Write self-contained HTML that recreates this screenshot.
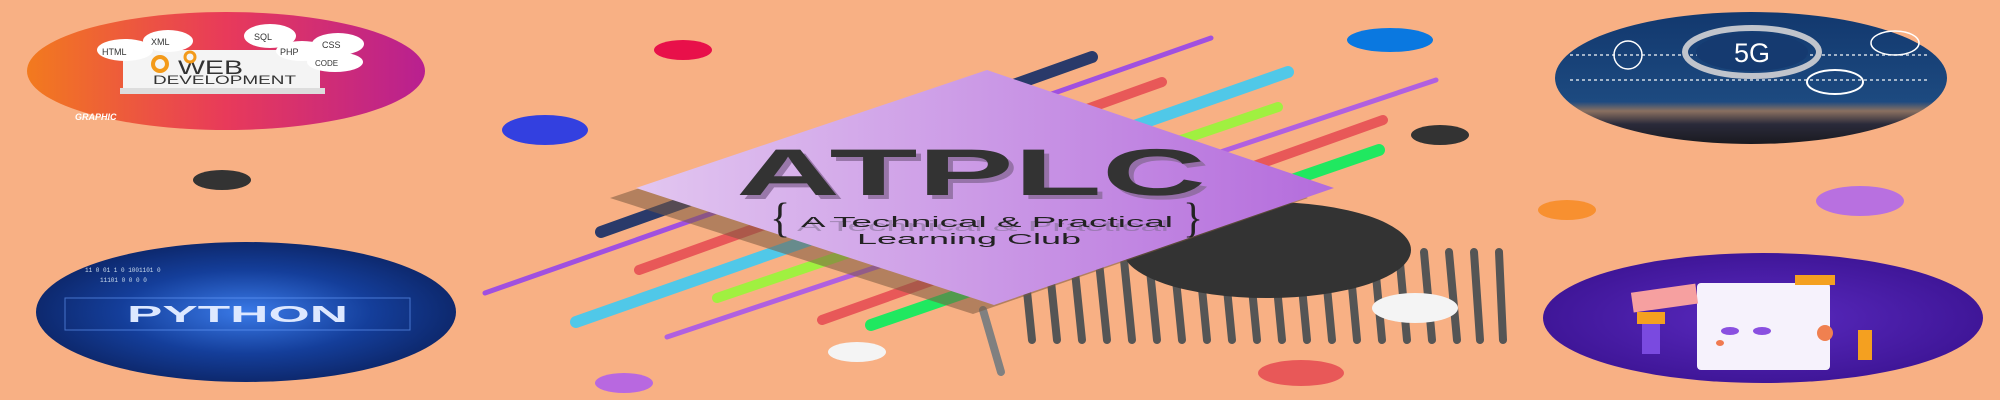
<!DOCTYPE html>
<html><head><meta charset="utf-8"><style>
html,body{margin:0;padding:0;background:#f8b084;}
svg{display:block}
</style></head><body>
<svg width="2000" height="400" viewBox="0 0 2000 400" xmlns="http://www.w3.org/2000/svg">
<defs>
<linearGradient id="dg" x1="0" y1="0" x2="1" y2="0">
<stop offset="0" stop-color="#e2c6f0"/><stop offset="1" stop-color="#b46cdc"/></linearGradient>
<linearGradient id="wg" x1="0" y1="0" x2="1" y2="0">
<stop offset="0" stop-color="#f27a1e"/><stop offset="0.5" stop-color="#e83a5a"/><stop offset="1" stop-color="#b82090"/></linearGradient>
<radialGradient id="pg" cx="0.5" cy="0.5" r="0.6">
<stop offset="0" stop-color="#3a7ae8"/><stop offset="0.5" stop-color="#143e9a"/><stop offset="1" stop-color="#0a1e58"/></radialGradient>
<linearGradient id="fg" x1="0" y1="0" x2="0" y2="1">
<stop offset="0" stop-color="#12386e"/><stop offset="0.68" stop-color="#1d4a80"/><stop offset="0.75" stop-color="#8a7060"/><stop offset="0.85" stop-color="#2a2a3a"/><stop offset="1" stop-color="#1a1a20"/></linearGradient>
<radialGradient id="ug" cx="0.5" cy="0.5" r="0.6">
<stop offset="0" stop-color="#5a2ac0"/><stop offset="1" stop-color="#3a1290"/></radialGradient>
</defs>
<rect width="2000" height="400" fill="#f8b084"/>

<!-- left images -->
<ellipse cx="226" cy="71" rx="199" ry="59" fill="url(#wg)"/>
<rect x="123" y="50" width="197" height="38" fill="#f4f4f4"/>
<rect x="120" y="88" width="205" height="6" fill="#ddd"/>
<text x="178" y="74" font-family="Liberation Sans,sans-serif" font-size="19" fill="#333" textLength="65" lengthAdjust="spacingAndGlyphs">WEB</text>
<text x="153" y="84" font-family="Liberation Sans,sans-serif" font-size="12" fill="#333" textLength="143" lengthAdjust="spacingAndGlyphs">DEVELOPMENT</text>
<circle cx="160" cy="64" r="7" fill="none" stroke="#f39a1a" stroke-width="4"/>
<circle cx="190" cy="57" r="5" fill="none" stroke="#f39a1a" stroke-width="3"/>
<ellipse cx="125" cy="50" rx="28" ry="11" fill="#fff"/>
<ellipse cx="168" cy="41" rx="25" ry="11" fill="#fff"/>
<ellipse cx="270" cy="36" rx="26" ry="12" fill="#fff"/>
<ellipse cx="338" cy="44" rx="26" ry="11" fill="#fff"/>
<ellipse cx="302" cy="51" rx="26" ry="10" fill="#fff"/>
<ellipse cx="335" cy="62" rx="28" ry="10" fill="#fff"/>
<text x="102" y="55" font-family="Liberation Sans,sans-serif" font-size="9" fill="#333">HTML</text>
<text x="151" y="45" font-family="Liberation Sans,sans-serif" font-size="9" fill="#333">XML</text>
<text x="254" y="40" font-family="Liberation Sans,sans-serif" font-size="9" fill="#333">SQL</text>
<text x="322" y="48" font-family="Liberation Sans,sans-serif" font-size="9" fill="#333">CSS</text>
<text x="280" y="55" font-family="Liberation Sans,sans-serif" font-size="9" fill="#333">PHP</text>
<text x="315" y="66" font-family="Liberation Sans,sans-serif" font-size="8" fill="#333">CODE</text>
<text x="75" y="120" font-family="Liberation Sans,sans-serif" font-size="9" font-weight="bold" font-style="italic" fill="#fff">GRAPHIC</text>

<ellipse cx="222" cy="180" rx="29" ry="10" fill="#333"/>

<ellipse cx="246" cy="312" rx="210" ry="70" fill="url(#pg)"/>
<rect x="65" y="298" width="345" height="32" fill="none" stroke="#6aa0ff" stroke-width="1" opacity="0.6"/>
<text x="127" y="322" font-family="Liberation Sans,sans-serif" font-size="23" font-weight="bold" fill="#dde8ff" textLength="221" lengthAdjust="spacingAndGlyphs">PYTHON</text>
<text x="85" y="272" font-family="Liberation Mono,monospace" font-size="6" fill="#cde">11 0  01 1 0 1001101 0</text>
<text x="100" y="282" font-family="Liberation Mono,monospace" font-size="6" fill="#cde">11101 0  0 0 0</text>

<!-- right images -->
<ellipse cx="1751" cy="78" rx="196" ry="66" fill="url(#fg)"/>
<line x1="1570" y1="55" x2="1930" y2="55" stroke="#fff" stroke-width="1.5" stroke-dasharray="3 3" opacity="0.8"/>
<line x1="1570" y1="80" x2="1930" y2="80" stroke="#fff" stroke-width="1.5" stroke-dasharray="3 3" opacity="0.8"/>
<ellipse cx="1752" cy="52" rx="67" ry="24" fill="none" stroke="#c0c4cc" stroke-width="6"/>
<ellipse cx="1752" cy="52" rx="56" ry="19" fill="#153a70"/>
<text x="1752" y="62" text-anchor="middle" font-family="Liberation Sans,sans-serif" font-size="27" fill="#fff">5G</text>
<circle cx="1628" cy="55" r="14" fill="none" stroke="#fff" stroke-width="1.5"/>
<ellipse cx="1835" cy="82" rx="28" ry="12" fill="none" stroke="#fff" stroke-width="2"/>
<ellipse cx="1895" cy="43" rx="24" ry="12" fill="none" stroke="#fff" stroke-width="1.5"/>

<ellipse cx="1567" cy="210" rx="29" ry="10" fill="#f89030"/>
<ellipse cx="1860" cy="201" rx="44" ry="15" fill="#b870e0"/>

<ellipse cx="1763" cy="318" rx="220" ry="65" fill="url(#ug)"/>
<rect x="1697" y="283" width="133" height="87" rx="4" fill="#f6f2fc"/>
<ellipse cx="1730" cy="331" rx="9" ry="4" fill="#8a50e0"/>
<ellipse cx="1762" cy="331" rx="9" ry="4" fill="#8a50e0"/>
<ellipse cx="1720" cy="343" rx="4" ry="3" fill="#f07a50"/>
<rect x="1632" y="288" width="65" height="20" fill="#f6a0a0" transform="rotate(-8 1665 298)"/>
<rect x="1637" y="312" width="28" height="12" fill="#f4a020"/>
<rect x="1642" y="324" width="18" height="30" fill="#7a4ae0"/>
<rect x="1795" y="275" width="40" height="10" fill="#f4a020"/>
<rect x="1858" y="330" width="14" height="30" fill="#f4a020"/>
<circle cx="1825" cy="333" r="8" fill="#f08050"/>

<!-- center dots -->
<ellipse cx="683" cy="50" rx="29" ry="10" fill="#e8104a"/>
<ellipse cx="545" cy="130" rx="43" ry="15" fill="#3340e0"/>
<ellipse cx="1390" cy="40" rx="43" ry="12" fill="#0a78e0"/>
<ellipse cx="1440" cy="135" rx="29" ry="10" fill="#333"/>
<ellipse cx="857" cy="352" rx="29" ry="10" fill="#f4f4f4"/>
<ellipse cx="624" cy="383" rx="29" ry="10" fill="#b868e0"/>
<ellipse cx="1301" cy="373" rx="43" ry="13" fill="#e85858"/>

<!-- stripes -->
<g stroke="#555" stroke-width="8" stroke-linecap="round">
<line x1="1024" y1="262" x2="1032" y2="340"/><line x1="1049" y1="262" x2="1057" y2="340"/>
<line x1="1074" y1="262" x2="1082" y2="340"/><line x1="1099" y1="262" x2="1107" y2="340"/>
<line x1="1124" y1="260" x2="1132" y2="340"/><line x1="1149" y1="260" x2="1157" y2="340"/>
<line x1="1174" y1="260" x2="1182" y2="340"/><line x1="1199" y1="258" x2="1207" y2="340"/>
<line x1="1224" y1="258" x2="1232" y2="340"/><line x1="1249" y1="258" x2="1257" y2="340"/>
<line x1="1274" y1="256" x2="1282" y2="340"/><line x1="1299" y1="256" x2="1307" y2="340"/>
<line x1="1324" y1="256" x2="1332" y2="340"/><line x1="1349" y1="254" x2="1357" y2="340"/>
<line x1="1374" y1="254" x2="1382" y2="340"/><line x1="1399" y1="252" x2="1407" y2="340"/>
<line x1="1424" y1="252" x2="1432" y2="340"/><line x1="1449" y1="252" x2="1457" y2="340"/>
<line x1="1474" y1="252" x2="1480" y2="340"/><line x1="1499" y1="252" x2="1503" y2="340"/>
</g>
<ellipse cx="1267" cy="250" rx="144" ry="48" fill="#333"/>
<ellipse cx="1415" cy="308" rx="43" ry="15" fill="#f4f4f4"/>

<!-- diagonal lines -->
<g stroke-linecap="round" fill="none">
<line x1="601" y1="232" x2="1092" y2="57" stroke="#2a3a6a" stroke-width="12"/>
<line x1="485" y1="293" x2="1211" y2="38" stroke="#a050e0" stroke-width="5"/>
<line x1="639" y1="270" x2="1162" y2="82" stroke="#e85858" stroke-width="10"/>
<line x1="576" y1="322" x2="1288" y2="72" stroke="#50c8e8" stroke-width="12"/>
<line x1="717" y1="298" x2="1278" y2="107" stroke="#a0f040" stroke-width="10"/>
<line x1="667" y1="337" x2="1436" y2="80" stroke="#b060e0" stroke-width="5"/>
<line x1="822" y1="320" x2="1383" y2="120" stroke="#e85858" stroke-width="10"/>
<line x1="871" y1="325" x2="1379" y2="150" stroke="#20e860" stroke-width="12"/>
<line x1="983" y1="310" x2="1001" y2="372" stroke="#808080" stroke-width="8"/>
</g>

<!-- diamond -->
<polygon points="610,198 961,80 1308,198 973,314" fill="#7a5a40" opacity="0.55"/>
<polygon points="987,70 1334,188 994,305 636,188" fill="url(#dg)"/>

<text x="741" y="199" font-family="Liberation Sans,sans-serif" font-size="66" font-weight="bold" fill="#8a6a9a" textLength="470" lengthAdjust="spacingAndGlyphs" opacity="0.8">ATPLC</text>
<text x="736" y="195" font-family="Liberation Sans,sans-serif" font-size="66" font-weight="bold" fill="#333" textLength="470" lengthAdjust="spacingAndGlyphs">ATPLC</text>
<text x="770" y="232" font-family="Liberation Serif,serif" font-size="42" fill="#222">{</text>
<text x="1183" y="232" font-family="Liberation Serif,serif" font-size="42" fill="#222">}</text>
<text x="797" y="231" font-family="Liberation Sans,sans-serif" font-size="15" fill="#7a6a8a" textLength="372" lengthAdjust="spacingAndGlyphs" opacity="0.5">A Technical &amp; Practical</text>
<text x="801" y="227" font-family="Liberation Sans,sans-serif" font-size="15" fill="#222" textLength="372" lengthAdjust="spacingAndGlyphs">A Technical &amp; Practical</text>
<text x="857" y="244" font-family="Liberation Sans,sans-serif" font-size="15" fill="#222" textLength="224" lengthAdjust="spacingAndGlyphs">Learning Club</text>
</svg>
</body></html>
